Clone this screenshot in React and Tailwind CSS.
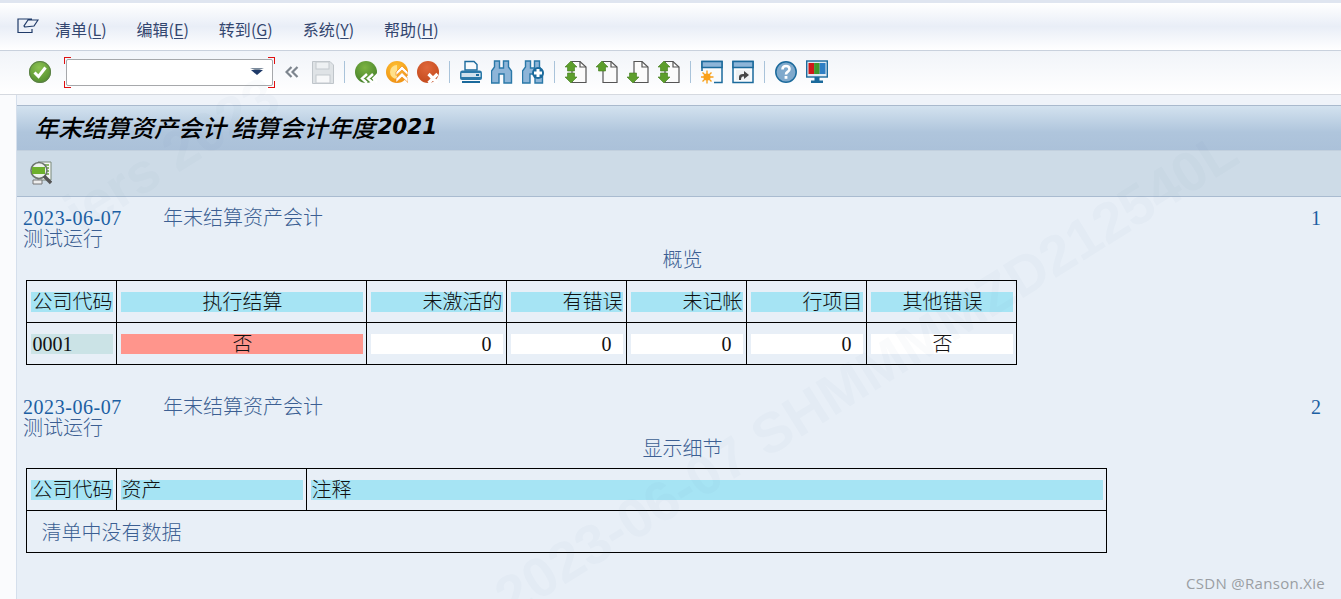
const cjk = "font-['Liberation_Serif','Noto_Sans_CJK_SC',serif]";

const menus = [
    { name: "清单", key: "L" },
    { name: "编辑", key: "E" },
    { name: "转到", key: "G" },
    { name: "系统", key: "Y" },
    { name: "帮助", key: "H" },
];

function Svg({ children, w = 22, h = 24, className = "" }) {
    return (
        <svg width={w} height={h} viewBox={`0 0 ${w} ${h}`} className={`shrink-0 ${className}`}>
            {children}
        </svg>
    );
}

function Ball({ from, to, children }) {
    const id = `ball-${from.slice(1)}`;
    return (
        <Svg>
            <defs>
                <radialGradient id={id} cx="45%" cy="30%" r="75%">
                    <stop offset="0%" stopColor={from} />
                    <stop offset="100%" stopColor={to} />
                </radialGradient>
            </defs>
            <circle cx="11" cy="12" r="11" fill={`url(#${id})`} />
            {children}
        </Svg>
    );
}

function CheckIcon() {
    return (
        <Ball from="#8cc252" to="#4f8a2b">
            <circle cx="11" cy="12" r="10.5" fill="none" stroke="#5d7d4d" strokeWidth="1" />
            <path d="M5.5 12.5 L9.5 16.5 L16.5 7.5" fill="none" stroke="#fff" strokeWidth="3" />
        </Ball>
    );
}

function BackIcon() {
    return (
        <Ball from="#7cb342" to="#44802a">
            <path d="M12 14 L7 18.5 L12 23 M18 14 L13 18.5 L18 23 M23 14 L18.5 18.5 L23 23" fill="none" stroke="#fff" strokeWidth="2.4" />
        </Ball>
    );
}

function UpIcon() {
    return (
        <Ball from="#ffc233" to="#ee9012">
            <path d="M11 5 A7 7 0 0 0 11 19 Z" fill="#ffe08a" />
            <path d="M10 12 L16 6 L22 12 L22 15.5 L16 10 L10 15.5 Z M10 18.5 L16 12.5 L22 18.5 L22 22.5 L16 17 L10 22.5 Z" fill="#fff" stroke="#f08a1c" strokeWidth="0.7" />
        </Ball>
    );
}

function CancelIcon() {
    return (
        <Ball from="#e0673a" to="#c2491c">
            <path d="M11.5 14 L20.5 23 M20.5 14 L11.5 23" stroke="#fff" strokeWidth="3.2" />
        </Ball>
    );
}

function SaveIcon() {
    return (
        <Svg>
            <path d="M0.5 1.5 H18 L21.5 5 V23.5 H0.5 Z" fill="#dfe3e6" stroke="#bfc5ca" />
            <rect x="4" y="2" width="13" height="7" fill="#eef1f3" stroke="#c4c9ce" />
            <rect x="4" y="15" width="14" height="8" fill="#f7f8f9" stroke="#c4c9ce" />
        </Svg>
    );
}

function PrinterIcon() {
    return (
        <Svg>
            <path d="M5 1.5 H14 L17 4.5 V10 H5 Z" fill="#f7fafc" stroke="#1b6a9c" strokeWidth="1.4" />
            <path d="M2 10.5 H20 Q22 10.5 22 13 V18 Q22 20 20 20 H2 Q0 20 0 18 V13 Q0 10.5 2 10.5 Z" fill="#2a78a8" />
            <rect x="1.5" y="13" width="19" height="4" fill="#cfe0ec" />
            <rect x="16" y="14" width="3" height="2" fill="#1b6a9c" />
            <rect x="2" y="21" width="18" height="2" fill="#1b6a9c" />
        </Svg>
    );
}

function BinocularIcon({ plus }) {
    return (
        <Svg>
            <path d="M3.5 1 H8.5 V8 H12.5 V1 H17.5 V7 L20.5 11 V23 H13 V14 H8 V23 H0.5 V11 L3.5 7 Z" fill="#8db5d8" stroke="#2a78a8" strokeWidth="1.4" />
            {plus && (
                <g>
                    <circle cx="16" cy="13" r="6" fill="#1b6a9c" />
                    <path d="M16 9 V17 M12 13 H20" stroke="#fff" strokeWidth="3" />
                </g>
            )}
        </Svg>
    );
}

function PageIcon({ top, bottom }) {
    const arrowUp = (x, y) => `M${x} ${y} L${x + 6} ${y + 6} H${x + 3.5} V${y + 10} H${x - 3.5} V${y + 6} H${x - 6} Z`;
    const arrowDown = (x, y) => `M${x} ${y} L${x + 6} ${y - 6} H${x + 3.5} V${y - 10} H${x - 3.5} V${y - 6} H${x - 6} Z`;
    return (
        <Svg>
            <path d="M7 1.5 H15 L21 7 V22.5 H7 Z" fill="#fbfbfb" stroke="#555" strokeWidth="1.2" />
            <path d="M15 1.5 V7 H21" fill="none" stroke="#555" strokeWidth="1.2" />
            {top && <path d={arrowUp(6, 1)} fill="#5d9e2c" stroke="#3f7a1d" strokeWidth="0.6" />}
            {bottom && <path d={arrowDown(6, 23)} fill="#5d9e2c" stroke="#3f7a1d" strokeWidth="0.6" />}
        </Svg>
    );
}

function WindowNewIcon() {
    return (
        <Svg>
            <rect x="1" y="1.5" width="20" height="21" fill="#f9fbfd" stroke="#1b6a9c" strokeWidth="1.5" />
            <rect x="1" y="1.5" width="20" height="6" fill="#8db5d8" stroke="#1b6a9c" strokeWidth="1.5" />
            <rect x="0" y="11" width="13" height="13" fill="#f9fbfd" />
            <circle cx="6" cy="17" r="3.6" fill="#f9a11b" />
            <path d="M6 10.5 V23.5 M-0.5 17 H12.5 M1.5 12.5 L10.5 21.5 M10.5 12.5 L1.5 21.5" stroke="#f9a11b" strokeWidth="1.4" />
        </Svg>
    );
}

function WindowLinkIcon() {
    return (
        <Svg>
            <rect x="1" y="1.5" width="20" height="21" fill="#f9fbfd" stroke="#1b6a9c" strokeWidth="1.5" />
            <rect x="1" y="1.5" width="20" height="6" fill="#8db5d8" stroke="#1b6a9c" strokeWidth="1.5" />
            <rect x="4" y="10" width="14" height="10" fill="#eef0f1" />
            <path d="M7 20 V17 Q7 14 11 14 H12 V11 L17 15 L12 19 V16.5 H11 Q9 16.5 9 20 Z" fill="#444" />
        </Svg>
    );
}

function HelpIcon() {
    return (
        <Svg>
            <circle cx="11" cy="12" r="10.2" fill="#7fa9cc" stroke="#1b6a9c" strokeWidth="1.5" />
            <path d="M7.5 9.5 Q7.5 6 11 6 Q14.5 6 14.5 9 Q14.5 11 12.5 12 Q11 12.8 11 14.5" fill="none" stroke="#fff" strokeWidth="2.6" />
            <rect x="9.6" y="16" width="2.8" height="2.8" fill="#fff" />
        </Svg>
    );
}

function MonitorIcon() {
    return (
        <Svg>
            <rect x="0.7" y="1" width="20.6" height="16" fill="#dfeaf3" stroke="#1b6a9c" strokeWidth="1.4" />
            <rect x="2.5" y="3" width="5.6" height="11" fill="#d01818" />
            <rect x="8.1" y="3" width="5.6" height="11" fill="#3f9a2c" />
            <rect x="13.7" y="3" width="5.8" height="11" fill="#2f7fc4" />
            <rect x="8.5" y="17" width="5" height="4" fill="#1b6a9c" />
            <rect x="5" y="20.5" width="12" height="2.5" fill="#1b6a9c" />
        </Svg>
    );
}

function ExitIcon() {
    return (
        <svg width="22" height="18" viewBox="0 0 22 18" className="shrink-0">
            <path d="M15 12 V15.5 H1 V2 H15 M8 10 L17 9 L21 3 H11 L7 9 Z" fill="none" stroke="#1f3a68" strokeWidth="1.2" />
        </svg>
    );
}

function DetailIcon() {
    return (
        <Svg>
            <path d="M8 1 H21 V19 H8 Z" fill="#f4f6f4" stroke="#7b8a7a" />
            <path d="M15 4 H19 M15 7 H19 M15 10 H19 M15 13 H19" stroke="#6aa53a" strokeWidth="1.4" />
            <circle cx="9" cy="9.5" r="8" fill="#eef3ee" stroke="#6d766f" strokeWidth="1.6" />
            <rect x="2" y="6" width="13" height="7" fill="#6db02d" />
            <path d="M14 15 L21 22" stroke="#555" strokeWidth="3.4" />
            <path d="M3 19 H12 V23 H3 Z" fill="#eee" stroke="#777" />
        </Svg>
    );
}

function Sep() {
    return <div className="w-px h-[22px] bg-[#a9c3da] mx-[10px] shrink-0" />;
}

function Combo() {
    const corner = "absolute w-[7px] h-[7px] border-[#e01010]";
    return (
        <div className="relative w-[211px] h-[31px] p-[2px] mt-[1px] mr-[10px] shrink-0">
            <span className={`${corner} left-0 top-0 border-l border-t`} />
            <span className={`${corner} right-0 top-0 border-r border-t`} />
            <span className={`${corner} left-0 bottom-0 border-l border-b`} />
            <span className={`${corner} right-0 bottom-0 border-r border-b`} />
            <div className="h-full bg-white border border-[#a6a8ab] rounded-[2px] flex items-center justify-end pr-[8px]">
                <svg width="14" height="8" viewBox="0 0 14 8">
                    <path d="M0 0 H14 L7 3 Z" fill="#7c8b9c" />
                    <path d="M1 2 H13 L7 7 Z" fill="#1f3a68" />
                </svg>
            </div>
        </div>
    );
}

function Toolbar() {
    return (
        <div className="h-[44px] flex items-center pl-[29px] pb-[2px] bg-gradient-to-b from-[#f1f4f9] to-white border-b border-[#d5d9e0]">
            <div className="mr-[13px] flex"><CheckIcon /></div>
            <Combo />
            <svg width="14" height="12" viewBox="0 0 14 12" className="mr-[13px] shrink-0">
                <path d="M6.5 1 L1.5 6 L6.5 11 M12.5 1 L7.5 6 L12.5 11" fill="none" stroke="#7d858e" strokeWidth="2.2" />
            </svg>
            <SaveIcon />
            <Sep />
            <div className="flex gap-[9px]">
                <BackIcon />
                <UpIcon />
                <CancelIcon />
            </div>
            <Sep />
            <div className="flex gap-[9px]">
                <PrinterIcon />
                <BinocularIcon />
                <BinocularIcon plus />
            </div>
            <Sep />
            <div className="flex gap-[9px]">
                <PageIcon top bottom />
                <PageIcon top />
                <PageIcon bottom />
                <PageIcon top bottom />
            </div>
            <Sep />
            <div className="flex gap-[9px]">
                <WindowNewIcon />
                <WindowLinkIcon />
            </div>
            <Sep />
            <div className="flex gap-[9px]">
                <HelpIcon />
                <MonitorIcon />
            </div>
        </div>
    );
}

function Bar({ children, bg, align = "text-left", extra = "" }) {
    return (
        <div className={`h-5 leading-5 ml-[4px] mr-[3px] ${bg} ${align} ${extra}`}>{children}</div>
    );
}

function Cell({ children, width, ...rest }) {
    return (
        <td className="border border-black p-0 h-[42px] align-middle" style={width ? { width } : undefined} {...rest}>
            {children}
        </td>
    );
}

function ReportHead({ page, title }) {
    return (
        <div className="leading-[21px] text-[20px] font-light">
            <div className="flex text-[#1c5fa3] pl-[6px] pr-[20px] justify-between">
                <div className="flex">
                    <span className="w-[140px] tracking-[0.55px]">2023-06-07</span>
                    <span className="text-[#3c5f93]">年末结算资产会计</span>
                </div>
                <span>{page}</span>
            </div>
            <div className="pl-[6px] text-[#3c5f93]">测试运行</div>
            <div className="text-center text-[#3c5f93] pl-[7px]">{title}</div>
        </div>
    );
}

function OverviewTable() {
    const cyan = "bg-[#a6e4f4]";
    const heads = [
        { t: "未激活的", w: 140 },
        { t: "有错误", w: 120 },
        { t: "未记帐", w: 120 },
        { t: "行项目", w: 120 },
    ];
    return (
        <table className="border-collapse table-fixed w-[990px] ml-[8.5px] mt-[9px] text-[#111] text-[20px] font-light">
            <tbody>
                <tr>
                    <Cell width={90}><Bar bg={cyan} extra="pl-[2px]">公司代码</Bar></Cell>
                    <Cell width={250}><Bar bg={cyan} align="text-center" extra="pl-[2px]">执行结算</Bar></Cell>
                    {heads.map((h) => (
                        <Cell key={h.t} width={h.w}><Bar bg={cyan} align="text-right">{h.t}</Bar></Cell>
                    ))}
                    <Cell width={150}><Bar bg={cyan} align="text-center" extra="pl-[2px]">其他错误</Bar></Cell>
                </tr>
                <tr>
                    <Cell><Bar bg="bg-[#cbe3e6]" extra="pl-[2px]">0001</Bar></Cell>
                    <Cell><Bar bg="bg-[#ff958c]" align="text-center" extra="pl-[2px]">否</Bar></Cell>
                    {heads.map((h) => (
                        <Cell key={h.t}><Bar bg="bg-white" align="text-right" extra="pr-[11px]">0</Bar></Cell>
                    ))}
                    <Cell><Bar bg="bg-white" align="text-center" extra="pl-[2px]">否</Bar></Cell>
                </tr>
            </tbody>
        </table>
    );
}

function DetailTable() {
    const cyan = "bg-[#a6e4f4]";
    return (
        <table className="border-collapse table-fixed w-[1080px] ml-[8.5px] mt-[8px] text-[#111] text-[20px] font-light">
            <tbody>
                <tr>
                    <Cell width={90}><Bar bg={cyan} extra="pl-[2px]">公司代码</Bar></Cell>
                    <Cell width={190}><Bar bg={cyan} extra="pl-[1px]">资产</Bar></Cell>
                    <Cell width={800}><Bar bg={cyan} extra="pl-[1px]">注释</Bar></Cell>
                </tr>
                <tr>
                    <td colSpan={3} className="border border-black p-0 h-[42px] pl-[15px] pt-[3px] text-[#3c5f93]">清单中没有数据</td>
                </tr>
            </tbody>
        </table>
    );
}

function Watermark({ left, top, text }) {
    return (
        <span
            className="absolute pointer-events-none whitespace-nowrap origin-[0_50%] -rotate-[32deg] text-[56px] leading-[64px] font-bold text-[#5a7a9a]/[0.03] font-['Liberation_Sans',sans-serif]"
            style={{ left, top }}
        >
            {text}
        </span>
    );
}

export default function App() {
    return (
        <div className={`relative w-[1341px] h-[599px] overflow-hidden bg-[#fafbfd] ${cjk}`}>
            <div className="h-[3px] bg-[#dfe5f0]" />
            <div className="h-[48px] flex items-center bg-gradient-to-b from-white via-[#e9eef7] to-white pl-[17px] border-b border-[#c9d1dd] font-['Noto_Sans_CJK_SC',sans-serif] text-[16px] text-[#33466f]">
                <div className="-mt-[2px] mr-[16px]"><ExitIcon /></div>
                <div className="flex gap-[30px] mt-[5px]">
                    {menus.map((m) => (
                        <span key={m.key}>
                            {m.name}(<span className="underline underline-offset-2">{m.key}</span>)
                        </span>
                    ))}
                </div>
            </div>
            <Toolbar />
            <div className="flex h-[504px]">
                <div className="w-[17px] shrink-0 border-r border-[#d5dfec]" />
                <div className="flex-1 flex flex-col">
                    <div className="h-[11px] bg-[#eff3f9] border-b border-[#a9b9cd]" />
                    <div className="h-[45px] flex items-center pl-[17px] pb-[2px] bg-gradient-to-b from-[#d3e2ef] via-[#afc5dc] via-60% to-[#abc1d9] border-b border-[#c2d0de] text-[24px] italic font-medium text-black font-['Noto_Sans_CJK_SC',sans-serif]">
                        年末结算资产会计 结算会计年度<span className="ml-[2px] font-['DejaVu_Sans',sans-serif] font-bold text-[21.5px]">2021</span>
                    </div>
                    <div className="h-[46px] flex items-center pl-[13px] pb-[2px] bg-[#cddbe7] border-b border-[#a9bbd0]">
                        <DetailIcon />
                    </div>
                    <div className="flex-1 bg-[#e8eff7] pt-[11px]">
                        <ReportHead page="1" title="概览" />
                        <OverviewTable />
                        <div className="h-[32px]" />
                        <ReportHead page="2" title="显示细节" />
                        <DetailTable />
                    </div>
                </div>
            </div>
            <Watermark left={461} top={595} text="s 2023-06-07 SHMMMMZD212540L" />
            <Watermark left={70} top={186} text="iers 2023" />
            <span className="absolute left-[1186px] top-[574px] text-[15px] leading-[18px] tracking-[0.3px] text-[#9a9ea3] font-['Open_Sans',sans-serif]">
                CSDN @Ranson.Xie
            </span>
        </div>
    );
}
